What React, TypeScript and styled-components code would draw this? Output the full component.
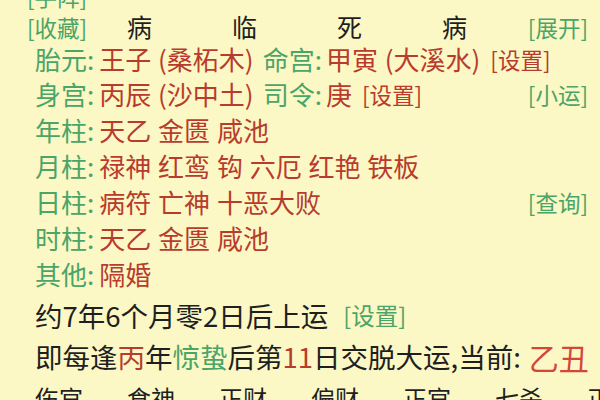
import React from "react";
import styled, { createGlobalStyle } from "styled-components";

const C = {
  bg: "#fbf8c5",
  green: "#4ba468",
  red: "#b83b2d",
  bright: "#d4463a",
  ink: "#1f1f1f",
};

const Global = createGlobalStyle`
  html, body { margin: 0; padding: 0; background: ${C.bg}; }
  body { font-family: "Noto Sans CJK SC", "Noto Sans", sans-serif; }
  #root { width: 600px; height: 400px; overflow: hidden; }
`;

const Page = styled.div`
  width: 600px;
  height: 400px;
  overflow: hidden;
  background: ${C.bg};
  display: flex;
  flex-direction: column;
`;

const Scroll = styled.div`
  margin-top: -20px;
  display: flex;
  flex-direction: column;
`;

const HeaderRow = styled.div`
  height: 31px;
  display: grid;
  grid-template-columns: 60px repeat(4, 105px) 1fr;
  align-items: center;
  padding: 0 12px 0 27px;
  font-size: 25px;
  line-height: 1;
`;

const Cell = styled.span<{ $end?: boolean }>`
  justify-self: ${(p) => (p.$end ? "end" : "center")};
  color: ${C.ink};
  white-space: nowrap;
`;

const FirstCell = styled.span`
  justify-self: start;
  white-space: nowrap;
`;

const Row = styled.div<{ $h: number; $size?: number; $top?: number }>`
  height: ${(p) => p.$h}px;
  margin-top: ${(p) => p.$top ?? 0}px;
  display: flex;
  align-items: center;
  padding: 0 12px 0 35px;
  font-size: ${(p) => p.$size ?? 26}px;
  line-height: 1;
  white-space: nowrap;
`;

const Label = styled.span<{ $gap?: number }>`
  color: ${C.green};
  margin-left: ${(p) => p.$gap ?? 0}px;
`;

const Val = styled.span<{ $gap?: number }>`
  color: ${C.red};
  margin-left: ${(p) => p.$gap ?? 0}px;
  word-spacing: 1px;
`;

const Plain = styled.span`
  color: ${C.ink};
`;

const Link = styled.span<{ $tone?: "green" | "red"; $size?: number; $gap?: number }>`
  color: ${(p) => (p.$tone === "red" ? C.red : C.green)};
  font-size: ${(p) => p.$size ?? 22.5}px;
  margin-left: ${(p) => p.$gap ?? 0}px;
`;

const Spacer = styled.span`
  flex: 1;
`;

const Big = styled.span`
  color: ${C.bright};
  font-size: 30px;
  margin-left: 8px;
`;

const GodRow = styled.div`
  height: 40px;
  display: grid;
  grid-template-columns: repeat(7, 92px);
  align-items: center;
  padding-left: 35px;
  font-size: 24px;
  line-height: 1;
  color: ${C.ink};
  white-space: nowrap;
`;

const details: { label: string; vals: string; right?: string }[] = [
  { label: "年柱", vals: "天乙 金匮 咸池" },
  { label: "月柱", vals: "禄神 红鸾 钩 六厄 红艳 铁板" },
  { label: "日柱", vals: "病符 亡神 十恶大败", right: "[查询]" },
  { label: "时柱", vals: "天乙 金匮 咸池" },
  { label: "其他", vals: "隔婚" },
];

const gods = ["伤官", "食神", "正财", "偏财", "正官", "七杀", "正印"];

export default function App() {
  return (
    <Page>
      <Global />
      <Scroll>
        <HeaderRow>
          <FirstCell>
            <Link>[手阵]</Link>
          </FirstCell>
        </HeaderRow>
        <HeaderRow>
          <FirstCell>
            <Link>[收藏]</Link>
          </FirstCell>
          <Cell>病</Cell>
          <Cell>临</Cell>
          <Cell>死</Cell>
          <Cell>病</Cell>
          <Cell $end>
            <Link>[展开]</Link>
          </Cell>
        </HeaderRow>
        <Row $h={34}>
          <Label>胎元:</Label>
          <Val $gap={5}>王子 (桑柘木)</Val>
          <Label $gap={9}>命宫:</Label>
          <Val $gap={4}>甲寅 (大溪水)</Val>
          <Link $tone="red" $gap={10}>[设置]</Link>
        </Row>
        <Row $h={36}>
          <Label>身宫:</Label>
          <Val $gap={5}>丙辰 (沙中土)</Val>
          <Label $gap={9}>司令:</Label>
          <Val $gap={4}>庚</Val>
          <Link $tone="red" $gap={10}>[设置]</Link>
          <Spacer />
          <Link>[小运]</Link>
        </Row>
        {details.map((d) => (
          <Row key={d.label} $h={36}>
            <Label>{d.label}:</Label>
            <Val $gap={5}>{d.vals}</Val>
            {d.right && (
              <>
                <Spacer />
                <Link>{d.right}</Link>
              </>
            )}
          </Row>
        ))}
        <Row $h={40} $top={4} $size={27.5}>
          <Plain>约7年6个月零2日后上运</Plain>
          <Link $size={23.5} $gap={15}>[设置]</Link>
        </Row>
        <Row $h={42} $size={27.5}>
          <Plain>即每逢</Plain>
          <Val>丙</Val>
          <Plain>年</Plain>
          <Label>惊蛰</Label>
          <Plain>后第</Plain>
          <Val>11</Val>
          <Plain>日交脱大运,当前:</Plain>
          <Big>乙丑</Big>
        </Row>
        <GodRow>
          {gods.map((g, i) => (
            <span key={i}>{g}</span>
          ))}
        </GodRow>
      </Scroll>
    </Page>
  );
}
